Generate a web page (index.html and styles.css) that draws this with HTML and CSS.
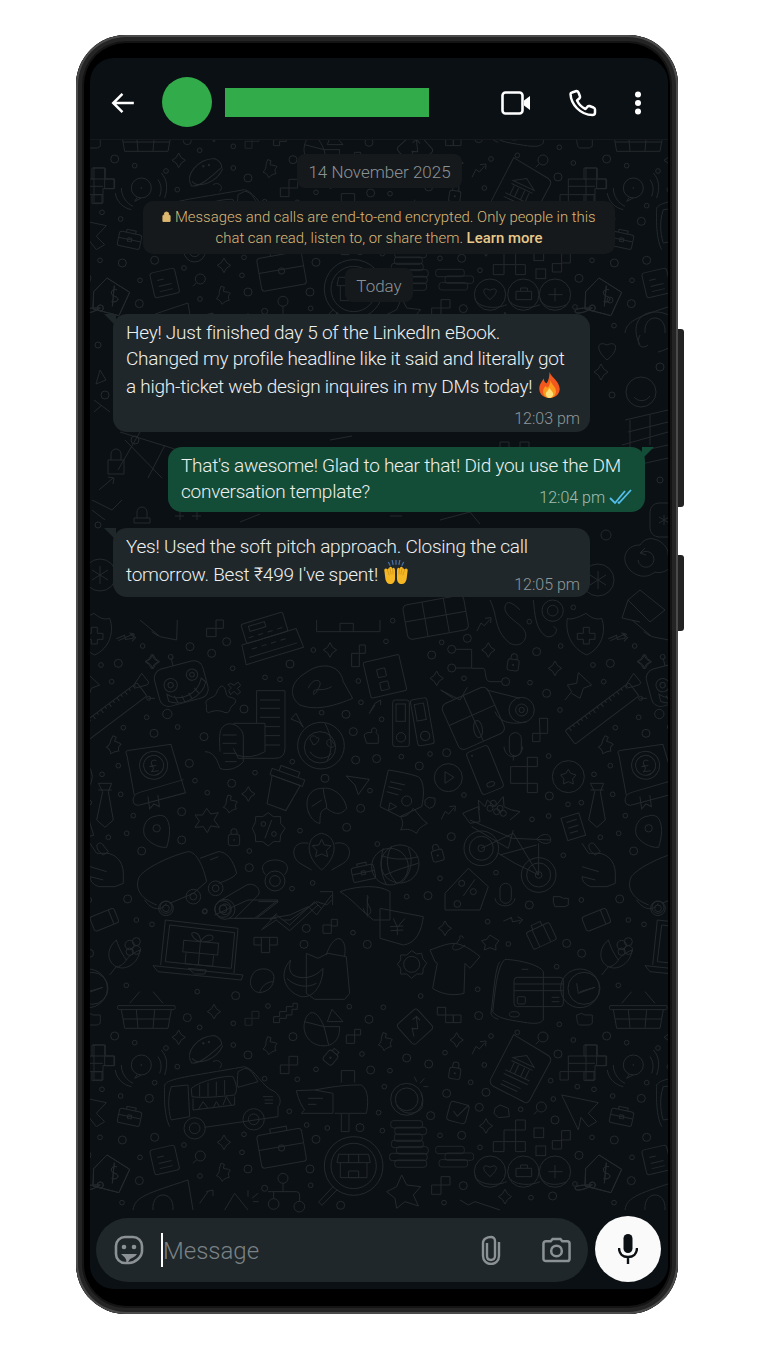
FILE: index.html
```html
<!DOCTYPE html>
<html lang="en">
<head>
    <meta charset="UTF-8">
    <meta name="viewport" content="width=device-width, initial-scale=1.0">
    <title>Chat</title>
    <link rel="stylesheet" href="styles.css">
</head>
<body>

<div class="phone">
    <div class="side-btn side-power"></div>
    <div class="side-btn side-volume"></div>

    <div class="screen">
        <header class="chat-header">
            <svg class="back-icon" viewBox="0 0 24 24" width="26" height="26"><path d="M22 12H3.500M11.500 3.500 3 12l8.500 8.500" fill="none" stroke="#fff" stroke-width="2.300"/></svg>
            <div class="avatar"></div>
            <div class="name-block"></div>
            <div class="header-icons">
                <svg class="icon-video" viewBox="0 0 30 24" width="30" height="24"><rect x="1.500" y="1.500" width="20" height="21" rx="3" fill="none" stroke="#fff" stroke-width="2.600"/><path d="M23 9.500 29 5v14l-6-4.500z" fill="#fff"/></svg>
                <svg class="icon-call" viewBox="0 0 28 28" width="28" height="28"><path d="M3 3.500 7.500 2c1 0 1.500.500 2 1.500l1.500 4c.2.800 0 1.300-.5 1.800L8 11.500c1.800 3.800 4.700 6.700 8.500 8.500l2.200-2.500c.5-.5 1-.7 1.800-.5l4 1.500c1 .5 1.500 1 1.500 2v3c0 1.500-1 2.500-2.500 2.500C11 26 2 15 1.500 5c0-.5.500-1.200 1.500-1.500z" fill="none" stroke="#fff" stroke-width="2.500" stroke-linejoin="round"/></svg>
                <svg class="icon-more" viewBox="0 0 8 24" width="8" height="24"><circle cx="4" cy="3.500" r="3"/><circle cx="4" cy="12" r="3"/><circle cx="4" cy="20.500" r="3"/></svg>
            </div>
        </header>

        <main class="chat">
            <svg class="wallpaper" viewBox="90 140 578 1149" width="578" height="1149">
                <defs>
                    <circle id="o" r="7"/>
                    <circle id="O" r="12"/>
                    <path id="sp" d="M0-22Q5-6 20 0Q5 6 0 22Q-5 6-20 0Q-5-6 0-22Z"/>
                    <g id="lk"><rect x="-17" y="-12" width="34" height="34" rx="7"/><path d="M-9-12v-8a9 9 0 0 1 18 0v8"/><circle cy="5" r="1.500"/></g>
                    <path id="core" d="M-6-30 4-27 1-15C9-12 16-14 22-9 16-3 14 4 19 12 10 13 4 17-3 24-6 15-11 10-20 7-13 1-10-6-11-15Z"/>
                    <path id="tr" d="M-24 18-12-6-2 2 14-16M0-20 18-22 17-6"/>
                    <path id="tt" d="M-26 0H0V26H-26ZM0-26H26V0H0Z"/>
                    <g id="mag"><circle cx="4" cy="-4" r="15"/><path d="M-7 7-18 18"/></g>
                    <g id="dtag"><path d="M-18-55 50-12 18 58-60 38-58-14Z" stroke-linejoin="round"/><circle cx="-38" cy="35" r="9"/><path d="M-38 35C-60 50-90 55-90 45-90 35-60 35-38 35"/><path d="M12-20C-8-24-10-4 5 0S18 20-4 16M4-32-2 30" stroke-width="3"/></g>
                    <g id="bk"><rect x="-60" y="-11" width="120" height="22" rx="10"/></g>
                    <g id="brief"><rect x="-34" y="-20" width="68" height="44" rx="7"/><path d="M-14-20v-9h28v9M-34 0H34"/><rect x="-6" y="-5" width="12" height="11" rx="2"/></g>
                    <g id="basket"><path d="M-85-18H85Q90-6 80-6H-80Q-90-6-85-18ZM-75-6-65 50H65L75-6M-70 22H70M-30-6-25 50M25-6 20 50M-50-25-20-60M50-25 20-60" stroke-linejoin="round"/></g>
                    <g id="corn"><path d="M-50 60-30 35C-60 20-60-20-30-45-20-15-10 0 0 15-10 30-20 35-30 35M-30 35C0 50 40 20 40-15 20-5 5 5 0 15"/><circle cx="10" cy="-30" r="14"/><circle cx="30" cy="-40" r="12"/><circle cx="30" cy="-15" r="13"/><circle cx="10" cy="-10" r="11"/></g>
                    <g id="wave"><circle r="30"/><path d="M-12 28-20 40 0 30M-60 0C-60 25-45 45-25 55M50-25C60-10 62 5 55 25M-78 15C-75 40-55 60-30 65M60-45C78-25 80 0 70 30"/><circle cy="0" r="1.500"/></g>
                </defs>

                <g id="tile" class="doodle">
                    <!-- top left block -->
                    <g transform="translate(90 620) scale(.3333)">
                        <path d="M85 65 130 45M118 42 133 45 128 58" transform="translate(0 -3)"/>
                        <path d="M150 0 210 50 260 60 262 0M205 48 185 35"/>
                        <g transform="translate(540 60) rotate(-17)"><path d="M-85-10H85L90 50H-90Z" stroke-linejoin="round"/><rect x="-70" y="-70" width="130" height="60" rx="6"/><rect x="-50" y="-58" width="50" height="16"/><path d="M-60-25h16M-30-25h16M0-25h16M30-25h16M-60 10h16M-30 10h16M0 10h16M30 10h16M-75 32H75"/></g>
                        <path d="M680 35V0M870 35V0M680 35H870M750 35V10H790V35"/>
                        <path d="M350 50H378V25H400V0H378V25H350Z"/>
                        <use href="#sp" x="185" y="125"/><use href="#sp" x="720" y="90"/>
                        <path d="M155 160 175 185Q178 192 170 195L140 203Q130 200 135 190Z" stroke-linejoin="round"/>
                        <g transform="translate(275 195) rotate(-15)"><rect x="-75" y="-62" width="150" height="115" rx="28"/><circle cx="-32" cy="-8" r="20"/><circle cx="-32" cy="-8" r="8"/><circle cx="38" cy="-22" r="17"/><circle cx="38" cy="-22" r="7"/><path d="M-50 15C-20 50 40 40 62 -5L72 10C50 55-20 60-50 38ZM-30 25-24 48M-8 30-4 52M14 28 20 50M34 18 44 38"/><path d="M-10-62V-85"/><circle cx="-10" cy="-90" r="7"/></g>
                        <circle cx="232" cy="282" r="14"/><path d="M175 235H195"/><circle cx="176" cy="235" r="6"/>
                        <path d="M395 198C410 200 405 225 415 230 435 235 445 240 430 255 415 262 425 280 405 278 390 270 375 270 355 278 345 275 352 260 348 250 345 240 360 235 370 230 382 225 380 205 395 198Z"/>
                        <path d="M422 190 432 196 444 186 452 196 442 206 452 216 442 224 432 214 422 224 416 212 424 204 414 194Z"/>
                        <g transform="translate(60 280) rotate(-37)"><rect x="-120" y="-25" width="240" height="50" rx="5"/><path d="M-105-25v12M-90-25v8M-75-25v12M-60-25v8M-45-25v12M-30-25v8M-15-25v12M0-25v8M15-25v12M30-25v8M45-25v12M60-25v8M75-25v12M90-25v8M105-25v12"/></g>
                        <path d="M645 160C690 125 750 130 760 185L788 235C740 255 680 275 630 255 600 235 595 190 645 160Z" stroke-linejoin="round"/>
                        <path d="M655 205C665 175 695 175 690 195 680 220 665 235 672 212 682 205 700 215 725 200"/>
                        <path d="M785 100H808V75H826V100H808V140H785Z"/>
                        <g transform="translate(880 170) rotate(-13)"><rect x="-50" y="-55" width="110" height="110" rx="5"/><rect x="-15" y="-25" width="25" height="25" rx="3"/><rect x="-15" y="15" width="25" height="25" rx="3"/></g>
                        <path d="M500 212H585V385Q585 415 555 415H445L430 385"/>
                        <path d="M500 212V310M510 240H570M510 265H570M510 292H570M525 320H570M525 347H570M525 375H570"/>
                        <path d="M345 395C375 395 385 430 390 445 410 455 445 445 460 425V350C460 320 415 295 395 325 385 340 390 380 390 395M398 345H440M398 370H440M400 400H440M405 425H440"/>
                        <path d="M430 310H525V395Q480 420 440 405"/>
                        <path d="M618 280 640 322 628 307 603 297Z" stroke-linejoin="round"/>
                        <circle cx="693" cy="377" r="70"/><path d="M705 310C720 340 735 380 710 425"/><circle cx="690" cy="382" r="47"/>
                        <path d="M665 365C650 350 675 340 680 355 690 345 690 370 670 375ZM715 378C700 360 725 350 730 370 740 372 730 390 715 378ZM660 395C675 420 710 420 725 400"/>
                        <path d="M845 327C855 318 865 330 858 338L865 345V370H830L822 345Q830 335 845 338Z"/>
                        <path d="M855 250 838 280M855 250 872 240 872 255M838 280 855 255"/>
                        <g transform="translate(200 465) rotate(-8)"><path d="M-75-85H55L78 65-60 82C-90 85-85 50-60 45L78 25M-75-85Q-85-85-80-70L-75 50"/><circle cy="-30" cx="-5" r="42"/><circle cy="-30" cx="-5" r="30"/><path d="M5-42C-8-52-15-38-8-28-5-20-10-12-16-12H8M-18-28H3"/><path d="M-35 60V98L-20 85 -5 95V60"/></g>
                        <use href="#core" x="70" y="378" transform="rotate(10 70 378)"/><use href="#core" x="420" y="555"/>
                        <path d="M25 490H65L55 515 70 600 45 622 20 600 38 515Z" stroke-linejoin="round"/>
                        <path d="M25 510H65"/>
                        <g transform="translate(580 505) rotate(20)"><path d="M-45-25 45-25 30 60H-30Z"/><path d="M-52-25V-45H52V-25H-52M-30-45V-62H30V-45"/></g>
                        <path d="M655 530C640 570 670 610 690 610 690 585 690 570 710 565 730 580 750 590 770 565 765 530 730 500 700 505 680 505 665 510 655 530ZM700 505C700 530 712 550 710 565M665 560 695 540"/>
                        <path d="M768 468 838 478 805 524 795 495Z" stroke-linejoin="round"/>
                        <path d="M350 565 362 582 385 578 372 600 388 622 362 618 352 638 340 620 315 622 328 603 315 585 338 585Z"/>
                        <use href="#sp" x="475" y="522"/>
                        <path d="M535 578 550 590 572 590 572 610 585 625 572 645 570 665 550 665 535 678 518 665 497 665 496 645 487 625 497 605 497 590 518 590Z"/>
                        <path d="M545 600 525 655"/><circle cx="520" cy="612" r="7"/><circle cx="552" cy="642" r="7"/>
                        <path d="M200 588C170 590 155 620 163 645 172 665 205 685 230 682 240 650 245 610 225 590 215 585 205 585 200 588Z"/><circle cx="200" cy="625" r="11"/>
                        <use href="#lk" x="432" y="655"/>
                        <g transform="translate(695 690)"><path d="M0-50C-50-40-50 20 0 60 50 20 50-40 0-50ZM-40-20C-90-30-95 20-65 40L-30 60M40-20C90-30 95 20 65 40L30 60M0-32 8-15 28-13 14 2 18 20 0 12-18 20-14 2-28-13-8-15Z"/></g>
                        <use href="#brief" x="820" y="758" transform="rotate(-12 820 758)"/>
                        <path d="M0 670 20 700H50C70 700 100 720 100 760V790L75 800H25Q0 790 0 770M35 670C15 665 15 690 40 705L55 695ZM0 740 50 755M0 770 40 780"/>
                        <path d="M750 815C810 795 870 795 900 815V900H850C800 860 790 840 750 815ZM835 830C825 855 845 860 842 875S825 885 820 865M832 825V890"/>
                        <g><path d="M200 855C160 840 130 810 148 770 170 740 250 705 295 695 320 695 340 740 350 785L310 820 240 850"/><path d="M330 715 385 695C410 695 430 720 440 760 430 775 400 785 385 790M360 720 385 710"/><circle cx="228" cy="865" r="22"/><circle cx="228" cy="865" r="10"/><circle cx="310" cy="830" r="22"/><circle cx="310" cy="830" r="10"/><circle cx="377" cy="805" r="22"/><circle cx="377" cy="805" r="10"/></g>
                        <g transform="translate(555 765)"><circle cy="18" r="30"/><circle cy="18" r="16"/><path d="M-28 0C-50-25-30-45 0-45 30-45 50-25 28 0"/></g>
                        <g><circle cx="405" cy="868" r="30"/><circle cx="405" cy="868" r="16"/><path d="M385 845 470 795C495 785 515 810 505 825L435 895H560"/><path d="M505 845H565L500 895"/></g>
                        <path d="M540 895 600 885 655 860 680 885 725 825M690 815H728V855"/>
                        <path d="M540 900 560 880M580 900H600L680 845 710 855 725 840"/>
                        <circle cx="900" cy="740" r="55"/><path d="M880 685C870 720 870 760 890 795"/>
                    </g>
                    <!-- mid right block -->
                    <g transform="translate(380 600) scale(.3333)">
                        <g transform="rotate(-10 165 55)"><rect x="75" y="0" width="185" height="105" rx="14"/><path d="M75 50H260M135 0V105M200 0V105"/></g>
                        <use href="#tr" x="315" y="75"/>
                        <path d="M330 0C355 50 340 90 390 130 420 145 445 120 435 95 425 70 370 50 375 20 380 0 395 5 420 30"/>
                        <path d="M460 0C465 40 465 90 500 110 525 115 540 85 520 80"/>
                        <circle cx="518" cy="32" r="32"/><circle cx="518" cy="32" r="16"/>
                        <path d="M618 40C590 55 570 60 562 55 555 100 575 145 620 165 665 145 680 95 665 55 650 60 635 55 618 40ZM610 82H628V100H645V118H628V132H610V118H592V100H610Z"/>
                        <use href="#tr" x="715" y="118" transform="rotate(40 715 118)"/>
                        <use href="#sp" x="325" y="150"/><use href="#sp" x="170" y="235"/><use href="#sp" x="525" y="205"/><use href="#sp" x="795" y="185"/>
                        <use href="#lk" x="400" y="190" transform="rotate(8 400 190)"/>
                        <path d="M228 148H275V205H310C320 205 312 245 330 245H365"/><circle cx="215" cy="148" r="12"/><circle cx="215" cy="204" r="12"/><path d="M228 204H275"/><circle cx="377" cy="245" r="12"/>
                        <path d="M555 300 575 275 562 255 590 250 595 218 635 255 610 265 600 295 575 280"/>
                        <g transform="translate(-2 0)"><rect x="40" y="300" width="50" height="140" rx="8"/><rect x="50" y="312" width="28" height="52"/><circle cx="65" cy="412" r="14"/></g>
                        <g transform="rotate(-10 130 365)"><rect x="102" y="295" width="50" height="140" rx="8"/><rect x="112" y="310" width="28" height="50"/><circle cx="128" cy="408" r="14"/></g>
                        <g transform="translate(280 355) rotate(-24)"><rect x="-75" y="-75" width="150" height="150" rx="18"/><path d="M-75-10H75M0-75V75"/><ellipse cx="0" cy="35" rx="13" ry="26" transform="rotate(15 0 35)"/></g>
                        <path d="M240 300 182 270 220 295M240 300 262 262"/>
                        <path d="M320 270 420 295M345 335C360 370 400 375 440 365"/>
                        <circle cx="425" cy="330" r="38"/><circle cx="425" cy="330" r="18"/><circle cx="425" cy="330" r="8"/>
                        <path d="M478 355H503V400H480V425H458V400H480Z"/>
                        <rect x="388" y="398" width="36" height="70" rx="18"/><path d="M372 440C375 480 425 480 428 440M400 470V482"/>
                        <path d="M0 620 25 510C55 515 85 520 115 530 135 545 132 590 125 620L60 650Z"/><path d="M30 545 75 555M25 560 65 570M20 575 55 585"/><path d="M30 608 50 620 25 632Z"/><circle cx="80" cy="603" r="15"/>
                        <path d="M100 625C115 640 125 660 142 670 125 680 115 685 110 700 95 690 85 685 62 690 70 675 70 665 62 650 80 650 90 640 100 625Z"/>
                        <path d="M135 600 147 592 165 595 165 610 160 620 148 625 135 615Z"/>
                        <circle cx="205" cy="533" r="42"/><path d="M195 515 222 532 195 550Z" stroke-linejoin="round"/>
                        <g transform="translate(315 510) rotate(-22)"><rect x="-35" y="-68" width="70" height="136" rx="10"/><ellipse cy="46" rx="12" ry="7"/><circle cx="-20" cy="-54" r="1.500"/></g>
                        <path d="M392 500H442V472H472V500H442V578H472V550H442V550H392Z"/>
                        <circle cx="565" cy="530" r="48"/><path d="M565 508 572 520 588 525 578 537 580 552 565 545 550 552 552 537 542 525 558 520Z"/>
                        <use href="#tr" x="208" y="640"/>
                        <g><circle cx="304" cy="745" r="52"/><circle cx="304" cy="745" r="36"/><circle cx="304" cy="745" r="10"/><circle cx="476" cy="825" r="52"/><circle cx="476" cy="825" r="36"/><circle cx="476" cy="825" r="10"/><path d="M304 745 400 700 476 825V730M360 765 470 735M355 760 405 790 476 825"/><path d="M270 660 398 715 510 720M275 680 385 745 400 690M470 718C490 695 515 700 512 725 500 735 485 730 470 718Z"/><path d="M248 640 295 620 300 665 270 670Z"/><path d="M298 630 295 600 315 620 322 600 345 620 370 590 372 620 395 630 420 635 390 660"/><circle cx="330" cy="625" r="9"/><circle cx="350" cy="635" r="9"/><circle cx="370" cy="640" r="9"/><circle cx="340" cy="610" r="9"/><circle cx="360" cy="625" r="9"/></g>
                        <g transform="translate(580 680) rotate(-17)"><rect x="-28" y="-35" width="56" height="70"/><path d="M-16-18H16M-16 0H16M-16 16H10"/></g>
                        <use href="#lk" x="172" y="762" transform="rotate(-15 172 762)"/>
                        <circle cx="60" cy="792" r="57"/><path d="M35 738C10 780 25 825 50 848M85 745C105 790 85 830 65 848M8 768C40 780 80 780 115 770M15 825C50 810 80 800 115 790"/>
                        <path d="M195 880 265 805 325 860 300 930H195Z" stroke-linejoin="round"/><path d="M285 838 250 888"/><circle cx="245" cy="850" r="9"/><circle cx="280" cy="875" r="9"/>
                        <rect x="360" y="850" width="34" height="60" rx="17"/><path d="M345 895C350 925 400 925 405 895"/>
                        <path d="M520 890H540L550 895H565V915L555 920H525Q518 910 520 890Z"/>
                        <circle cx="232" cy="912" r="10"/>
                    </g>
                    <!-- bottom left block -->
                    <g transform="translate(88 900) scale(.3333)">
                        <g transform="translate(45 60) rotate(-22)"><rect x="-35" y="-22" width="78" height="46" rx="8"/><path d="M26-22V24" stroke-width="3"/></g>
                        <path d="M170 0C190 30 220 35 235 10M380 45 480 0H570L500 55H420"/><circle cx="234" cy="22" r="18"/><circle cx="405" cy="27" r="25"/><circle cx="405" cy="27" r="12"/>
                        <path d="M525 85 565 45 605 75 680 5 700 25M520 90 565 60 605 92 690 15"/>
                        <g><path d="M218 195 232 60 450 85 438 220M245 75 440 98 430 205 232 185Z"/><path d="M195 197 465 225 460 240 210 215Z" stroke-linejoin="round"/><path d="M300 205 355 210 350 222H320Z"/></g>
                        <g transform="rotate(5 335 150)"><path d="M285 125H390V160H285ZM295 160V195H378V160M335 125V195M335 125C310 120 295 95 320 100 335 105 335 125 335 125S350 95 370 105C380 120 350 125 335 125"/></g>
                        <use href="#corn" x="115" y="165"/>
                        <path d="M498 112H568V135H545V158H520V135H498ZM520 112V135M545 112V135"/>
                        <path d="M705 75H730V100H705ZM730 58H748V78H730Z"/>
                        <path d="M500 215C520 200 555 205 558 230 558 260 540 275 515 278 490 275 475 245 500 215ZM515 278C520 260 535 245 555 245"/>
                        <path d="M655 160 690 175 720 160 775 170 785 280 770 298H680L655 280ZM715 165C725 130 750 100 765 125 775 140 770 160 770 170"/>
                        <path d="M608 180C570 220 590 275 640 290 680 295 705 250 705 205 680 235 640 240 615 225 600 210 605 195 608 180ZM597 235C620 260 660 265 685 250"/>
                        <g transform="translate(175 335)"><use href="#basket"/></g>
                        <use href="#sp" x="378" y="335"/><use href="#sp" x="272" y="412"/><use href="#sp" x="408" y="727"/>
                        <use href="#tt" x="492" y="355" transform="translate(492 355) scale(.8) translate(-492 -355)"/>
                        <path d="M557 350H575V335H595V320H615V310H628V328H612V345H595V355H575V368H557Z"/>
                        <g><path d="M708 380C680 310 650 340 648 380 650 425 690 445 725 435 750 425 755 405 755 380H708ZM708 380 650 365M708 380 722 435"/><path d="M718 365 732 328 765 365Z" stroke-linejoin="round"/></g>
                        <path d="M775 405H800V430H775ZM800 388H818V405H800Z"/>
                        <use href="#core" x="545" y="440"/>
                        <g transform="translate(350 450) rotate(-40)"><path d="M-55 5C-50-35 10-45 50-15 60 0 55 15 50 20 10 20-35 25-55 5ZM-45-5C-45 25 10 45 50 25"/><circle cx="10" cy="-18" r="2"/><circle cx="25" cy="-10" r="2"/></g>
                        <path d="M375 485C390 475 410 490 395 505"/>
                        <g transform="translate(160 495)"><use href="#wave"/></g>
                        <path d="M12 435H50V468H78V497H50V468H12ZM12 515H42V542H12Z"/>
                        <use href="#tt" x="603" y="495"/>
                        <g transform="translate(730 470) rotate(40)"><rect x="-17" y="-15" width="34" height="38" rx="8"/><path d="M-9-15V-25H9V-15"/><circle cy="4" r="2"/></g>
                        <g><path d="M245 680C225 640 230 570 230 555 240 535 300 530 470 500 505 510 520 560 560 575 580 590 580 610 570 620L570 650 350 682M250 560C235 600 245 650 250 660L305 650 300 555ZM450 515C450 530 445 545 450 562L510 545C500 530 490 505 470 505Z"/><path d="M310 565C340 540 420 525 435 530 445 550 450 570 440 585 400 590 340 595 312 590ZM335 555V590M360 548V590M385 545V587M410 540V585"/><path d="M315 595V630L440 615 440 590M330 630 345 605 360 625M375 625 385 605 395 620M405 615 415 590 430 615"/><path d="M525 590H555M530 600H555M530 610H555"/><circle cx="320" cy="685" r="32"/><circle cx="320" cy="685" r="16"/><circle cx="497" cy="658" r="32"/><circle cx="497" cy="658" r="16"/></g>
                        <g><path d="M625 572 680 570 735 580 735 640 640 640 650 630C635 610 630 590 625 572Z"/><path d="M660 595H705M660 613H685"/><path d="M680 570C760 555 790 555 820 555 845 570 840 620 835 640H740"/><path d="M760 548V512H800V548M760 642V695H783V642"/></g>
                        <use href="#brief" x="125" y="650" transform="translate(125 650) rotate(12) scale(1) translate(-125 -650)"/>
                        <g transform="translate(580 740) rotate(-10)"><rect x="-68" y="-45" width="136" height="100" rx="10"/><path d="M-25-45V-58H25V-45M-68 0H68"/><circle cy="4" r="9"/></g>
                        <g transform="translate(797 798)"><circle r="88"/><circle r="68"/><path d="M-60 60-105 108-95 118-48 70"/><path d="M-45-35H45L50-10H-50ZM-40-10V35H40V-10M-15-35V-10M15-35V-10M-15 15H15V35H-15Z"/></g>
                        <g transform="translate(230 780) rotate(-13)"><rect x="-38" y="-38" width="76" height="76" rx="8"/><path d="M-20-12H0M-20 6H20M-20 22H20"/></g>
                        <use href="#mag" x="333" y="772"/>
                        <use href="#core" x="405" y="820"/>
                        <g transform="translate(75 820)"><use href="#dtag"/></g>
                        <g><circle cx="585" cy="835" r="15"/><circle cx="530" cy="865" r="9"/><circle cx="557" cy="912" r="16"/><circle cx="634" cy="920" r="16"/><path d="M585 850V875M540 875H625Q635 875 635 885V905M557 875V896"/></g>
                        <path d="M335 910 360 875M375 870 355 875M375 870 375 888"/>
                        <path d="M410 930 440 880 480 930M480 870V890M510 880 492 895M512 905H495"/>
                        <path d="M135 930C140 890 180 880 300 840L315 930M195 930C190 870 260 870 255 930"/>
                        <circle cx="0" cy="265" r="58"/><path d="M0 275 45 262"/>
                    </g>
                    <!-- bottom right block -->
                    <g transform="translate(380 900) scale(.3333)">
                        <path d="M130 50 0 25V115L70 135C110 130 125 90 130 50Z"/><path d="M40 55 52 82 75 55M52 82V105M30 80 70 78M32 92 70 90"/>
                        <use href="#sp" x="195" y="85"/>
                        <path d="M95 152 110 162 125 160 128 175 140 190 130 205 128 222 110 222 95 235 80 222 62 222 62 205 52 193 62 180 62 165 80 165Z"/><circle cx="95" cy="193" r="24"/>
                        <path d="M150 150C180 140 200 130 225 130 250 135 270 145 300 170L270 205 255 190 252 280C215 290 180 280 158 265L172 190 165 185ZM225 130C205 150 230 160 255 135M240 115 230 130M240 115C235 105 250 105 250 115"/>
                        <path d="M330 105 345 115 357 122 347 135 348 150 330 143 313 150 316 135 305 122 320 118Z"/>
                        <use href="#tr" x="400" y="65" transform="rotate(40 400 65)"/>
                        <g transform="translate(483 105) rotate(-25)"><rect x="-38" y="-25" width="76" height="56" rx="6"/><path d="M-15-25V-38H15V-25M-18-25V31M18-25V31"/></g>
                        <g><path d="M375 178C420 180 480 195 490 215V360C480 375 450 370 420 365 390 360 350 355 338 335 345 280 350 200 375 178Z"/><path d="M360 185C345 200 340 290 333 340 335 350 345 355 355 358"/><rect x="402" y="232" width="148" height="88" rx="10"/><path d="M402 252H550M402 272H550M515 292H538M515 305H538"/><rect x="412" y="290" width="24" height="22" rx="4"/><ellipse cx="403" cy="343" rx="15" ry="8"/><path d="M425 208H445"/></g>
                        <circle cx="612" cy="265" r="48"/><path d="M590 250 595 280 645 262"/>
                        <path d="M590 345 605 340 615 345H637V370L628 375H598Q590 370 590 345Z"/>
                        <g transform="translate(105 380) rotate(-42)"><rect x="-40" y="-40" width="80" height="80" rx="10"/><path d="M-22 20-10-2 2 10 22-18M8-20H24V-4"/></g>
                        <path d="M172 322H197V345H220V368H197V345H172ZM220 345H243V368H220Z"/>
                        <use href="#sp" x="230" y="420"/>
                        <use href="#tr" x="300" y="445"/>
                        <use href="#mag" x="485" y="415"/>
                        <g transform="translate(420 510) rotate(25)"><path d="M-62-88 60-75Q72-72 72-60L65 70Q62 85 50 82L-52 78Q-68 75-68 62Z"/><path d="M-35-25 0-48 35-25ZM-35-15H35M-25-12V18M-10-12V18M10-12V18M25-12V18M-40 18H40M-40 30H40M-35 50H25M-35 62H20"/></g>
                        <use href="#core" x="15" y="428"/>
                        <use href="#lk" x="225" y="515" transform="rotate(8 225 515)"/>
                        <path d="M615 435H652V468H680V497H645V515H618V515H645V540H618V515H565V540H540V515H565V468H618V435ZM618 468V515M565 490H645"/>
                        <g><circle cx="80" cy="598" r="48"/><circle cx="80" cy="598" r="34"/><path d="M50 615C60 640 100 650 125 625 130 610 130 590 122 580M103 530 110 545M133 535 120 550M145 560H130"/></g>
                        <g transform="translate(235 637) rotate(15)"><rect x="-30" y="-28" width="58" height="58" rx="9"/><path d="M-15 0 0 12 25-30"/></g>
                        <path d="M345 625 360 615 385 625 388 650 355 653 342 640Z"/>
                        <use href="#mag" x="480" y="625"/>
                        <path d="M545 585 655 608 625 640 650 665 625 680 603 652 595 690Z" stroke-linejoin="round"/>
                        <use href="#sp" x="318" y="678"/>
                        <path d="M340 725H372V690H407V660H436V690H407V725H436V755H407V725H372V755H340Z"/>
                        <rect x="462" y="684" width="29" height="29"/><rect x="468" y="738" width="29" height="29"/>
                        <path d="M517 722H545V692H571V720H545V747H517Z"/>
                        <use href="#bk" x="80" y="673" transform="translate(80 673) scale(.8 1) translate(-80 -673)"/>
                        <use href="#bk" x="92" y="693" transform="translate(92 693) scale(.8 1) translate(-92 -693)"/>
                        <use href="#bk" x="85" y="713" transform="translate(85 713) scale(.7 1) translate(-85 -713)"/>
                        <use href="#bk" x="82" y="732" transform="translate(82 732) scale(.8 1) translate(-82 -732)"/>
                        <use href="#bk" x="97" y="751" transform="translate(97 751) scale(.8 1) translate(-97 -751)"/>
                        <use href="#bk" x="85" y="771" transform="translate(85 771) scale(.95 1) translate(-85 -771)"/>
                        <use href="#bk" x="92" y="791" transform="translate(92 791) scale(.8 1) translate(-92 -791)"/>
                        <use href="#bk" x="210" y="750" transform="translate(210 750) scale(.72 1) translate(-210 -750)"/>
                        <use href="#bk" x="238" y="770" transform="translate(238 770) scale(.72 1) translate(-238 -770)"/>
                        <use href="#bk" x="220" y="790" transform="translate(220 790) scale(.72 1) translate(-220 -790)"/>
                        <g><circle cx="330" cy="815" r="47"/><circle cx="430" cy="815" r="47"/><circle cx="525" cy="815" r="47"/><path d="M285 825C290 855 350 860 380 845M385 825C390 855 450 860 480 845M480 825C485 855 530 860 560 845"/><path d="M330 830C300 805 310 790 330 802 350 790 360 805 330 830ZM408 805H455V830H408ZM422 805V795H442V805M525 795V835M505 815H548"/></g>
                        <g transform="translate(675 820)"><use href="#dtag"/></g>
                        <path d="M65 825 80 855 122 860 100 885 115 918 75 905 50 925 45 895 20 875 50 860Z"/>
                        <path d="M155 855H183V883H155ZM183 830H210V855H183Z"/>
                        <use href="#sp" x="375" y="890"/>
                        <path d="M240 900 265 915 285 905 360 930"/>
                    </g>
                    <!-- loose dots of the tile -->
                    <g transform="translate(90 620) scale(.3333)">
                        <use href="#O" x="300" y="80"/><use href="#O" x="365" y="100"/><use href="#O" x="410" y="65"/><use href="#o" x="158" y="78"/><use href="#o" x="33" y="135"/><use href="#O" x="85" y="130"/><use href="#o" x="65" y="185"/><use href="#o" x="428" y="145"/><use href="#O" x="600" y="132"/><use href="#o" x="670" y="90"/><use href="#o" x="525" y="172"/><use href="#o" x="570" y="178"/><use href="#o" x="805" y="183"/><use href="#o" x="813" y="247"/><use href="#O" x="768" y="283"/><use href="#o" x="875" y="298"/><use href="#o" x="695" y="278"/><use href="#O" x="462" y="267"/><use href="#o" x="170" y="292"/><use href="#o" x="100" y="323"/><use href="#O" x="192" y="340"/><use href="#o" x="263" y="321"/><use href="#O" x="342" y="350"/><use href="#o" x="607" y="425"/><use href="#O" x="790" y="335"/><use href="#O" x="797" y="420"/><use href="#O" x="860" y="416"/><use href="#O" x="298" y="430"/><use href="#o" x="85" y="437"/><use href="#o" x="36" y="463"/><use href="#o" x="92" y="523"/><use href="#o" x="315" y="482"/><use href="#o" x="495" y="458"/><use href="#O" x="425" y="490"/><use href="#o" x="352" y="518"/><use href="#O" x="705" y="475"/><use href="#o" x="840" y="512"/><use href="#O" x="812" y="565"/><use href="#o" x="130" y="587"/><use href="#O" x="275" y="575"/><use href="#o" x="110" y="640"/><use href="#o" x="55" y="652"/><use href="#O" x="275" y="660"/><use href="#o" x="630" y="632"/><use href="#O" x="770" y="622"/><use href="#o" x="862" y="672"/><use href="#O" x="155" y="693"/><use href="#o" x="478" y="693"/><use href="#O" x="478" y="743"/><use href="#o" x="668" y="789"/><use href="#o" x="606" y="806"/><use href="#O" x="113" y="837"/><use href="#o" x="345" y="873"/>
                    </g>
                    <g transform="translate(380 600) scale(.3333)">
                        <use href="#o" x="38" y="62"/><use href="#o" x="18" y="124"/><use href="#O" x="155" y="165"/><use href="#o" x="185" y="127"/><use href="#O" x="262" y="115"/><use href="#o" x="252" y="235"/><use href="#o" x="448" y="65"/><use href="#O" x="470" y="155"/><use href="#o" x="542" y="138"/><use href="#o" x="450" y="248"/><use href="#O" x="500" y="280"/><use href="#o" x="580" y="22"/><use href="#o" x="540" y="330"/><use href="#o" x="64" y="470"/><use href="#o" x="150" y="462"/><use href="#O" x="200" y="458"/><use href="#O" x="118" y="498"/><use href="#o" x="506" y="468"/><use href="#O" x="508" y="588"/><use href="#o" x="252" y="585"/><use href="#o" x="456" y="658"/><use href="#o" x="506" y="648"/><use href="#o" x="564" y="613"/><use href="#o" x="604" y="608"/><use href="#O" x="214" y="710"/><use href="#o" x="550" y="766"/><use href="#o" x="348" y="818"/><use href="#o" x="180" y="835"/><use href="#o" x="80" y="890"/><use href="#O" x="144" y="887"/><use href="#O" x="448" y="915"/><use href="#o" x="604" y="900"/>
                    </g>
                    <g transform="translate(88 900) scale(.3333)">
                        <use href="#o" x="145" y="60"/><use href="#o" x="192" y="73"/><use href="#o" x="350" y="35"/><use href="#O" x="655" y="85"/><use href="#O" x="648" y="133"/><use href="#o" x="795" y="98"/><use href="#O" x="838" y="133"/><use href="#o" x="115" y="256"/><use href="#o" x="328" y="275"/><use href="#O" x="443" y="287"/><use href="#o" x="540" y="318"/><use href="#o" x="784" y="320"/><use href="#O" x="298" y="353"/><use href="#o" x="335" y="382"/><use href="#o" x="436" y="370"/><use href="#O" x="843" y="358"/><use href="#O" x="80" y="408"/><use href="#O" x="615" y="410"/><use href="#o" x="140" y="428"/><use href="#o" x="234" y="444"/><use href="#o" x="436" y="435"/><use href="#O" x="480" y="465"/><use href="#o" x="822" y="462"/><use href="#o" x="268" y="500"/><use href="#o" x="684" y="508"/><use href="#O" x="848" y="510"/><use href="#o" x="530" y="536"/><use href="#o" x="628" y="538"/><use href="#o" x="200" y="548"/><use href="#o" x="42" y="568"/><use href="#o" x="98" y="588"/><use href="#O" x="184" y="595"/><use href="#o" x="604" y="634"/><use href="#o" x="872" y="638"/><use href="#o" x="656" y="675"/><use href="#o" x="718" y="684"/><use href="#O" x="816" y="683"/><use href="#o" x="36" y="712"/><use href="#O" x="103" y="720"/><use href="#O" x="200" y="712"/><use href="#o" x="468" y="703"/><use href="#O" x="684" y="718"/><use href="#o" x="288" y="735"/><use href="#o" x="462" y="757"/><use href="#o" x="156" y="772"/><use href="#O" x="480" y="807"/><use href="#O" x="666" y="807"/><use href="#o" x="336" y="828"/><use href="#O" x="154" y="842"/><use href="#o" x="668" y="856"/><use href="#o" x="102" y="908"/><use href="#O" x="758" y="916"/>
                    </g>
                    <g transform="translate(380 900) scale(.3333)">
                        <use href="#o" x="323" y="65"/><use href="#o" x="385" y="132"/><use href="#O" x="560" y="130"/><use href="#O" x="605" y="160"/><use href="#o" x="530" y="200"/><use href="#o" x="293" y="268"/><use href="#o" x="122" y="288"/><use href="#o" x="10" y="322"/><use href="#O" x="296" y="347"/><use href="#o" x="538" y="373"/><use href="#o" x="412" y="397"/><use href="#o" x="333" y="408"/><use href="#o" x="580" y="420"/><use href="#O" x="534" y="462"/><use href="#o" x="195" y="458"/><use href="#O" x="80" y="474"/><use href="#O" x="146" y="492"/><use href="#o" x="313" y="495"/><use href="#o" x="30" y="512"/><use href="#o" x="512" y="542"/><use href="#o" x="272" y="547"/><use href="#o" x="13" y="560"/><use href="#O" x="200" y="580"/><use href="#O" x="318" y="577"/><use href="#o" x="592" y="560"/><use href="#o" x="520" y="597"/><use href="#O" x="298" y="622"/><use href="#o" x="422" y="628"/><use href="#O" x="152" y="647"/><use href="#O" x="525" y="660"/><use href="#o" x="7" y="692"/><use href="#o" x="180" y="706"/><use href="#O" x="245" y="706"/><use href="#o" x="300" y="742"/><use href="#O" x="597" y="766"/><use href="#O" x="250" y="857"/><use href="#o" x="585" y="852"/><use href="#o" x="192" y="908"/><use href="#o" x="453" y="893"/><use href="#O" x="518" y="888"/>
                    </g>
                </g>
                <use href="#tile" x="492"/>
                <use href="#tile" x="-492"/>
                <use href="#tile" y="-877"/>
                <use href="#tile" x="492" y="-877"/>
                <use href="#tile" x="-492" y="-877"/>

                <!-- pieces that only show beside the bubbles -->
                <g class="doodle doodle-thin">
                    <path d="M640 345C630 325 640 312 655 312 670 312 680 320 680 345M640 335C635 345 642 350 648 345M658 352C665 350 672 348 675 340"/>
                    <path d="M607 360C595 350 597 340 607 345 617 340 620 350 607 360Z"/>
                    <path d="M601 364Q603 370 608 372Q603 374 601 380Q599 374 594 372Q599 370 601 364Z"/>
                    <circle cx="641" cy="392" r="15"/><path d="M634 397C638 402 646 402 650 396"/>
                    <circle cx="660" cy="367" r="4"/><circle cx="612" cy="395" r="3"/>
                    <path d="M625 420 668 410M628 432 668 422M622 445 668 432M610 458 668 445M615 470 668 458M630 420V450M650 415V445"/>
                    <path d="M120 432 178 450M125 440 162 478M140 432 118 470M165 445 148 478"/><circle cx="135" cy="440" r="4"/>
                    <path d="M111 460v-6a5 5 0 0 1 10 0v6M108 460h16v14h-16z"/>
                    <path d="M99 490 113 478M108 477 114 478 113 484"/>
                    <path d="M92 500 112 510 122 500M92 510 105 520"/>
                    <path d="M137 518v-6a5 5 0 0 1 10 0v6M134 518h16v5h-16z"/>
                    <path d="M175 516h9M180 511v9M192 516h9M197 511v9"/>
                    <circle cx="100" cy="575" r="16"/><path d="M100 566v18M92 570l16 10M108 570l-16 10"/>
                    <circle cx="598" cy="580" r="16"/><path d="M598 571v18M590 575l16 10M606 575l-16 10"/>
                    <rect x="650" y="503" width="28" height="34" rx="9"/><path d="M664 515v10M659 517l10 6M669 517l-10 6"/>
                    <path d="M630 570C620 560 625 545 640 545 650 530 670 545 668 555 678 565 665 575 655 572 645 580 635 575 630 570Z"/>
                    <path d="M638 560a8 8 0 1 0 3-7M645 548l-5 5 6 2"/>
                    <path d="M640 590 665 610 650 622 628 600ZM628 600 622 618 640 622"/>
                    <circle cx="606" cy="535" r="5"/><circle cx="660" cy="480" r="3"/><circle cx="98" cy="525" r="3"/><circle cx="98" cy="345" r="3"/><circle cx="105" cy="395" r="4"/><circle cx="610" cy="300" r="3"/>
                    <path d="M94 400 110 412M94 412 102 405"/><path d="M100 370 106 380 96 384Z"/>
                    <path d="M330 440 352 436M440 520 470 512 480 524M500 442h9v9h-9zM520 442h9v9h-9zM390 516h12M240 522 260 514"/>
                </g>
            </svg>

            <div class="chat-scroll">
                <div class="day-pill">14 November 2025</div>
                <div class="e2e-note">
                    <svg class="lock-icon" viewBox="0 0 10 12" width="9" height="11"><path d="M2.500 5V3.500a2.500 2.500 0 0 1 5 0V5M1 5h8v6.500H1z" fill="#dcb96f" stroke="#dcb96f"/></svg>
                    Messages and calls are end-to-end encrypted. Only people in this<br>
                    chat can read, listen to, or share them. <b>Learn more</b>
                </div>
                <div class="day-pill day-today">Today</div>

                <div class="bubble in">
                    <p>Hey! Just finished day 5 of the LinkedIn eBook.<br>
                    Changed my profile headline like it said and literally got<br>
                    a high-ticket web design inquires in my DMs today!
                    <svg class="emoji" viewBox="0 0 24 28" width="23" height="26"><path d="M12 0C14 6 22 9 23 18 23 24 18 28 12 28S1 24 1 18C1 13 4 10 6 7 6 10 7 12 9 12 11 9 12 5 12 0Z" fill="#f2581e"/><path d="M13 9C14 14 19 16 19 21 19 25 16 28 12 28S5 25 5 21C5 18 7 16 8 15 9 17 10 17 11 16 12 14 13 12 13 9Z" fill="#fb9a1c"/><path d="M12 17C13 20 16 21 16 24 16 26 14 28 12 28S8 26 8 24C8 21 11 20 12 17Z" fill="#fee07a"/></svg></p>
                    <div class="msg-time">12:03 pm</div>
                </div>

                <div class="bubble out">
                    <p>That's awesome! Glad to hear that! Did you use the DM<br>
                    conversation template?</p>
                    <div class="msg-time time-over">12:04 pm
                        <svg class="ticks" viewBox="0 0 24 16" width="24" height="16"><path d="M1 9 6 14 16 2M9 13 10 14 22 1" fill="none" stroke="#53bdeb" stroke-width="1.800"/></svg>
                    </div>
                </div>

                <div class="bubble in bubble-short">
                    <p>Yes! Used the soft pitch approach. Closing the call<br>
                    tomorrow. Best ₹499 I've spent!<svg class="emoji emoji-hands" viewBox="0 0 28 26" width="28" height="25"><path d="M10 0 11 5M14 0V5M18 0 17 5M6 2 8 6M22 2 20 6" stroke="#4a6fa5" stroke-width="1.300"/><path d="M2 12C1 9 4 8 5 10L7 8C8 6 10 7 10 9L11 8C13 8 13 10 13 12V19C13 23 11 25 8 25 5 25 4 23 3 20Z" fill="#f6b725"/><path d="M26 12C27 9 24 8 23 10L21 8C20 6 18 7 18 9L17 8C15 8 15 10 15 12V19C15 23 17 25 20 25 23 25 24 23 25 20Z" fill="#f6b725"/><path d="M5 10 7 16M7.500 8 9 15M10.500 9 11 15M23 10 21 16M20.500 8 19 15M17.500 9 17 15" fill="none" stroke="#c58a12" stroke-width=".7"/></svg></p>
                    <div class="msg-time time-over">12:05 pm</div>
                </div>
            </div>

            <div class="composer">
                <div class="input-bar">
                    <svg class="icon-sticker" viewBox="0 0 30 30" width="30" height="30"><path d="M15 2H19C24 2 28 6 28 11V16C28 22 21 28 15 28H11C6 28 2 24 2 19V11C2 6 6 2 11 2Z" fill="none" stroke="#8b9194" stroke-width="2.600"/><circle cx="10" cy="12" r="2.300" fill="#8b9194"/><circle cx="20" cy="12" r="2.300" fill="#8b9194"/><path d="M7 19H23C21 22 18 23 16 24 15 26 14 27 12 28 13 25 12 23 7 19Z" fill="#8b9194"/></svg>
                    <span class="caret"></span>
                    <span class="placeholder">Message</span>
                    <svg class="icon-clip" viewBox="0 0 20 30" width="20" height="30"><path d="M6 8V21C6 24 8 25 10 25S14 24 14 21V6C14 3 12 2 10 2 6 2 2 4 2 8V21C2 26 6 29 10 29S18 26 18 21V7" fill="none" stroke="#8b9194" stroke-width="2.400"/></svg>
                    <svg class="icon-camera" viewBox="0 0 30 26" width="29" height="26"><path d="M9 4 11 1.500H19L21 4H26C27.500 4 28.500 5 28.500 6.500V22C28.500 23.500 27.500 24.500 26 24.500H4C2.500 24.500 1.500 23.500 1.500 22V6.500C1.500 5 2.500 4 4 4Z" fill="none" stroke="#8b9194" stroke-width="2.600"/><circle cx="15" cy="14" r="5.500" fill="none" stroke="#8b9194" stroke-width="2.600"/></svg>
                </div>
                <button class="mic-btn">
                    <svg viewBox="0 0 20 30" width="20" height="30"><rect x="5.500" y="0" width="9" height="19" rx="4.500" fill="#0b1014"/><path d="M1 14C1 20 5 23 10 23S19 20 19 14M10 23V30" fill="none" stroke="#0b1014" stroke-width="2.400"/></svg>
                </button>
            </div>
        </main>
    </div>
</div>

</body>
</html>
```

FILE: styles.css
```css
body {
    margin: 0;
    background-color: white;
    font-family: Roboto, "Noto Sans", sans-serif;
}
.phone {
    position: relative;
    box-sizing: border-box;
    width: 602px;
    height: 1279px;
    margin: 35px 0 0 76px;
    padding: 23px 10px 25px 14px;
    background: #000;
    border-radius: 50px;
    box-shadow: inset 0 0 0 2px #4a4a4a, inset 0 0 0 6px #242424, inset 0 0 0 8px #141414;
}
.side-btn {
    position: absolute;
    left: 602px;
    width: 6px;
    background: #222;
    border-radius: 0 3px 3px 0;
}
.side-power {
    top: 294px;
    height: 178px;
}
.side-volume {
    top: 520px;
    height: 76px;
}
.screen {
    display: flex;
    flex-direction: column;
    height: 100%;
    border-radius: 24px;
    overflow: hidden;
    background: #0b1014;
}
.chat-header {
    display: flex;
    align-items: center;
    flex: none;
    box-sizing: border-box;
    height: 82px;
    padding: 0 0 0 20px;
    border-bottom: 1px solid #15191c;
}
.back-icon {
    margin-top: 8px;
    margin-right: 26px;
}
.avatar {
    width: 50px;
    height: 50px;
    margin-top: 7px;
    border-radius: 50%;
    background: #32ac4a;
}
.name-block {
    width: 204px;
    height: 29px;
    margin-left: 13px;
    margin-top: 7px;
    background: #32ac4a;
}
.header-icons {
    display: flex;
    align-items: center;
    margin-left: 72px;
    margin-top: 8px;
}
.icon-video {
    margin-right: 38px;
}
.icon-call {
    margin-right: 37px;
}
.icon-more {
    fill: #fff;
}
.chat {
    position: relative;
    display: flex;
    flex-direction: column;
    flex: 1;
    min-height: 0;
}
.wallpaper {
    position: absolute;
    top: 0;
    left: 0;
}
.doodle {
    fill: none;
    stroke: #24292d;
    stroke-width: 3;
}
.doodle-thin {
    stroke-width: 1;
}
.chat-scroll {
    position: relative;
    flex: 1;
    padding-top: 14px;
}
.day-pill {
    width: 165px;
    height: 34px;
    margin-left: 207px;
    border-radius: 8px;
    background: #15191c;
    color: #8b9296;
    font-size: 17px;
    font-weight: 300;
    line-height: 36px;
    text-align: center;
}
.day-today {
    width: 68px;
    margin-top: 14px;
    margin-left: 255px;
}
.e2e-note {
    box-sizing: border-box;
    width: 472px;
    height: 53px;
    margin: 13px 0 0 53px;
    padding-top: 6px;
    border-radius: 10px;
    background: #15191c;
    color: #d9b878;
    font-size: 14.900px;
    font-weight: 300;
    line-height: 21px;
    text-align: center;
}
.e2e-note b {
    color: #e9c98a;
    font-weight: 500;
}
.bubble {
    position: relative;
    box-sizing: border-box;
    width: 477px;
    padding: 6px 10px 3px 13px;
    border-radius: 14px;
    color: #eef0f0;
}
.bubble p {
    margin: 0;
    font-size: 19px;
    font-weight: 300;
    line-height: 26px;
    letter-spacing: -0.25px;
}
.bubble::before {
    content: "";
    position: absolute;
    top: 0;
    width: 12px;
    height: 12px;
}
.in {
    margin: 12px 0 0 23px;
    background: #1f272a;
}
.in::before {
    left: -9px;
    background: #1f272a;
    clip-path: polygon(0 0, 100% 0, 100% 100%);
}
.out {
    margin: 15px 0 0 78px;
    padding-bottom: 7px;
    background: #144d37;
}
.out::before {
    right: -9px;
    background: #144d37;
    clip-path: polygon(0 0, 100% 0, 0 100%);
}
.bubble-short {
    margin-top: 16px;
    padding-bottom: 9px;
}
.emoji {
    vertical-align: -5px;
    margin-left: 1px;
}
.emoji-hands {
    vertical-align: -4px;
    margin-left: 4px;
}
.msg-time {
    margin-top: 9px;
    color: #8f979b;
    font-size: 16px;
    font-weight: 300;
    line-height: 20px;
    text-align: right;
}
.time-over {
    position: absolute;
    right: 10px;
    bottom: 2px;
    margin: 0;
}
.out .time-over {
    right: 12px;
    bottom: 4px;
    color: #a3bdb1;
}
.ticks {
    vertical-align: -2px;
}
.composer {
    position: relative;
    display: flex;
    align-items: flex-end;
    flex: none;
    gap: 7px;
    padding: 0 7px 7px 6px;
}
.input-bar {
    display: flex;
    align-items: center;
    flex: 1;
    height: 64px;
    padding: 0 17px 0 18px;
    border-radius: 32px;
    background: #1f272a;
}
.caret {
    width: 2px;
    height: 34px;
    margin-left: 17px;
    background: #fff;
}
.placeholder {
    flex: 1;
    padding-top: 2px;
    color: #7b8285;
    font-size: 24px;
    font-weight: 300;
}
.icon-clip {
    margin-right: 41px;
}
.mic-btn {
    display: flex;
    align-items: center;
    justify-content: center;
    width: 66px;
    height: 66px;
    padding: 0;
    border: none;
    border-radius: 50%;
    background: #fafafa;
}
```
